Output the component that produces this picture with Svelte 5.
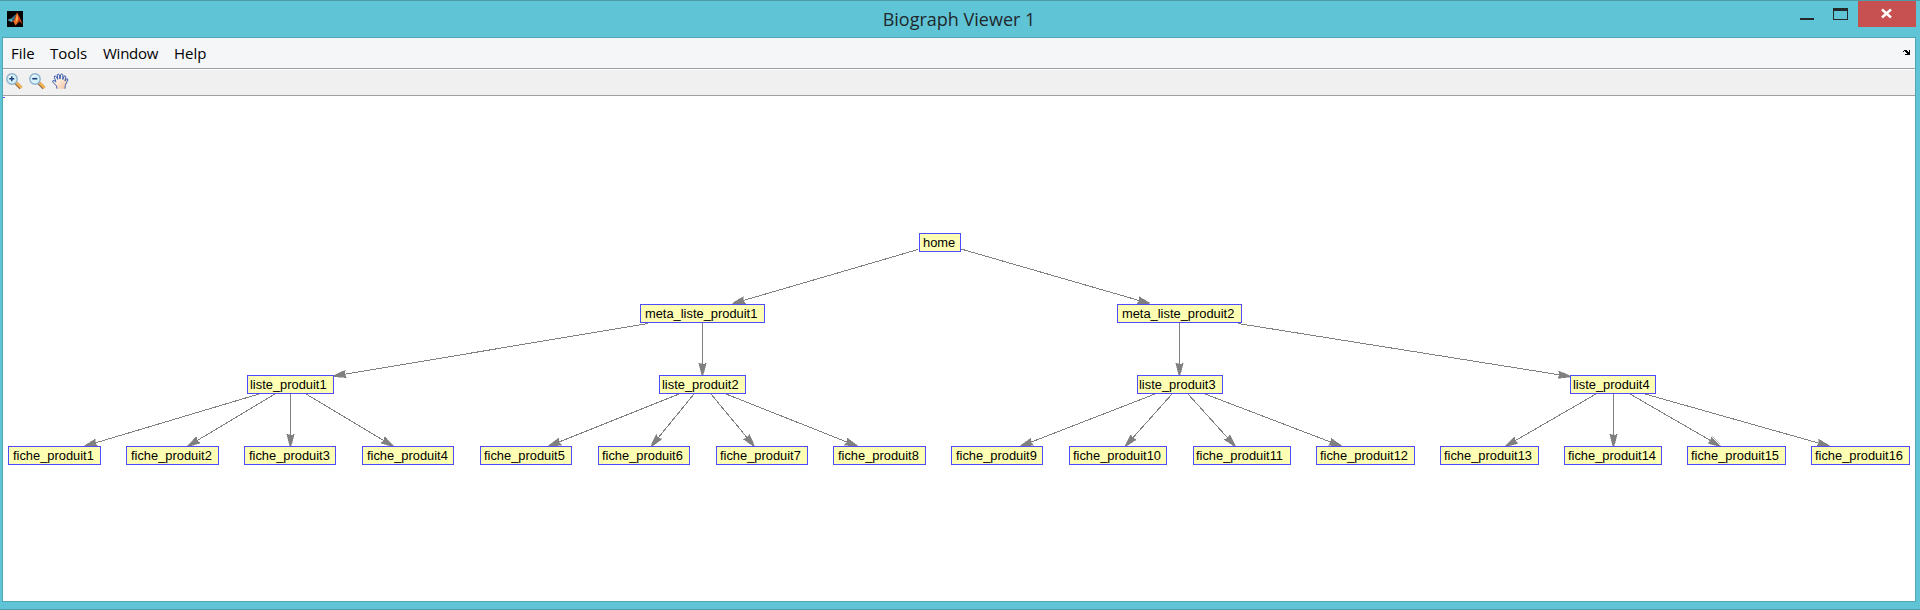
<script>
  // [label, left, top, width, text indent]
  const nodes = [
    ['home', 919, 233, 42, 3],
    ['meta_liste_produit1', 640, 304, 125, 4],
    ['meta_liste_produit2', 1117, 304, 125, 4],
    ['liste_produit1', 247, 375, 87, 2.4],
    ['liste_produit2', 659, 375, 87, 2.4],
    ['liste_produit3', 1137, 375, 86, 1.4],
    ['liste_produit4', 1570, 375, 86, 2.4],
    ['fiche_produit1', 8, 446, 93, 4.4],
    ['fiche_produit2', 126, 446, 93, 4.4],
    ['fiche_produit3', 244, 446, 92, 4.4],
    ['fiche_produit4', 362, 446, 92, 4.4],
    ['fiche_produit5', 480, 446, 92, 3.4],
    ['fiche_produit6', 598, 446, 92, 3.4],
    ['fiche_produit7', 716, 446, 92, 3.4],
    ['fiche_produit8', 833, 446, 93, 4.4],
    ['fiche_produit9', 951, 446, 92, 4.4],
    ['fiche_produit10', 1069, 446, 98, 3],
    ['fiche_produit11', 1193, 446, 98, 2.4],
    ['fiche_produit12', 1316, 446, 99, 3.4],
    ['fiche_produit13', 1440, 446, 99, 3.4],
    ['fiche_produit14', 1564, 446, 98, 3.4],
    ['fiche_produit15', 1687, 446, 99, 3.4],
    ['fiche_produit16', 1811, 446, 99, 3.4]
  ];
  // start point followed by arrow tip
  const edges = [
    [918, 249.5, 733, 303.5], [961, 249, 1149.5, 303.5],
    [648, 323.5, 334, 376], [702.5, 323, 702.5, 375],
    [1179.5, 323, 1179.5, 375], [1238, 323.5, 1570, 376.5],
    [259, 394, 85, 446], [275, 394, 188, 446], [290.5, 394, 290.5, 446], [306, 394, 393, 446],
    [679, 394, 549, 446], [694, 394, 651.5, 446], [711, 394, 754, 446], [726, 394, 857, 446],
    [1155, 394, 1021, 446], [1172, 394, 1125.5, 446], [1188, 394, 1235, 446], [1205, 394, 1341, 446],
    [1596, 394, 1506, 446], [1613.5, 394, 1613.5, 446], [1630, 394, 1720, 446], [1645, 394, 1829, 446]
  ];
  const angle = ([a, b, c, d]) => (Math.atan2(d - b, c - a) * 180) / Math.PI;
</script>

{#snippet lens()}
  <path d="M10 10 L15 15" stroke="#8d6a48" stroke-width="3.8" />
  <path d="M10.6 9.8 L15.6 14.8" stroke="#f8b450" stroke-width="2.4" />
  <circle cx="6" cy="6" r="5.2" fill="#d5f2fa" stroke="#8fb0cc" stroke-width="1.4" />
  <path d="M3 4.5 Q4 2.6 6 2.5" fill="none" stroke="#fff" stroke-width="1.2" />
{/snippet}

<div class="window">
  <header class="titlebar">
    <svg class="logo" width="16" height="16" viewBox="0 0 16 16">
      <rect width="16" height="16" fill="#050303" />
      <path d="M0.5 9 L5 7 L7.5 5 L9.5 3 L7 9 L4.5 11.3Z" fill="#55a3b8" />
      <path d="M5 7 L8.5 3.5 L7 9 L5 11Z" fill="#386f88" />
      <path d="M4 11 L6.5 10 Q8.5 6 10 1.5 Q12 4 15.7 13.2 L12.5 10.5 L8.5 14.5 L6.5 11Z" fill="#bd3c12" />
      <path d="M10 1.5 L11.6 8 L9.4 13 L8.5 14 L7 11 Q9 7 10 1.5Z" fill="#f27a22" />
      <path d="M10 3 L10.8 8 L9 11Z" fill="#ffc06a" />
    </svg>
    <h1>Biograph Viewer 1</h1>
    <div class="controls">
      <svg width="116" height="26" viewBox="0 0 116 26" shape-rendering="crispEdges">
        <rect x="0" y="17" width="14" height="2" fill="#26292b" />
        <rect x="33" y="7" width="15" height="12" fill="#26292b" />
        <rect x="34" y="10" width="13" height="8" fill="#60c4d7" />
        <rect x="58" width="58" height="26" fill="#c75050" />
        <path d="M82 8.5 L91 16.5 M91 8.5 L82 16.5" stroke="#fff" stroke-width="2.4" shape-rendering="auto" />
      </svg>
    </div>
  </header>

  <div class="content">
    <nav class="menu">
      <span class="file">File</span>
      <span class="tools">Tools</span>
      <span class="win">Window</span>
      <span class="help">Help</span>
      <svg class="dock" width="7" height="5" viewBox="0 0 7 5" shape-rendering="crispEdges">
        <path d="M1 0H4V1H5V2H6V0H7V5H2V4H4V3H3V2H2V1H1Z M0 1H1V2H0Z" fill="#000" />
      </svg>
    </nav>
    <div class="toolbar">
      <svg width="17" height="17" viewBox="0 0 17 17">
        {@render lens()}
        <path d="M3.3 5.7H8.3M5.8 3.2V8.2" stroke="#173c78" stroke-width="1.4" />
      </svg>
      <svg width="17" height="17" viewBox="0 0 17 17">
        {@render lens()}
        <path d="M3.3 5.7H8.3" stroke="#173c78" stroke-width="1.6" />
      </svg>
      <svg width="17" height="17" viewBox="0 0 17 17">
        <defs>
          <linearGradient id="skin" x2="1" y2="1">
            <stop offset="0" stop-color="#fff" />
            <stop offset="0.45" stop-color="#fdeadb" />
            <stop offset="1" stop-color="#f3bd92" />
          </linearGradient>
        </defs>
        <path d="M5 15.7 L4.5 13 L0.8 9 Q0.3 7.2 2 7.5 L4 9 L2.3 4.2 Q2.2 2.5 3.7 3 L5.8 6.4 L5.2 1.8 Q5.8 0.2 7.2 1.6 L8 6 L8.7 1.5 Q10 0.1 10.8 1.6 L10.8 6.5 L12 3.2 Q13.4 2.2 13.8 3.8 L13 8 L14.3 6 Q16.2 5.2 15.8 7 L13.3 12.4 L13 15.7Z" fill="url(#skin)" />
        <path d="M5 15.7 L4.5 13 L0.8 9 Q0.3 7.2 2 7.5 L4 9 L2.3 4.2 Q2.2 2.5 3.7 3 L5.8 6.4 L5.2 1.8 Q5.8 0.2 7.2 1.6 L8 6 L8.7 1.5 Q10 0.1 10.8 1.6 L10.8 6.5 L12 3.2 Q13.4 2.2 13.8 3.8 L13 8 L14.3 6 Q16.2 5.2 15.8 7 L13.3 12.4 L13 15.7" fill="none" stroke="#3f62b4" stroke-width="1" />
      </svg>
    </div>
    <main class="canvas">
      <svg class="edges" width="1912" height="505" viewBox="3 96 1912 505" shape-rendering="crispEdges">
        <rect x="3" y="97" width="2" height="1" fill="#5050e8" />
        {#each edges as e}
          <line x1={e[0]} y1={e[1]} x2={e[2]} y2={e[3]} />
          <path d="M0 -0.6 L-12 -3.8 L-11 -1 L-11 1 L-12 3.8 L0 0.6Z" transform={`translate(${e[2]} ${e[3]}) rotate(${angle(e)})`} />
        {/each}
      </svg>
      {#each nodes as [label, x, y, w, indent]}
        <div class="node" style={`left:${x - 3}px;top:${y - 96}px;width:${w}px;padding-left:${indent}px`}>
          <span>{label}</span>
        </div>
      {/each}
    </main>
  </div>
</div>

<style>
  :global(body) { margin: 0; overflow: hidden; }
  .window {
    box-sizing: border-box;
    width: 1920px;
    height: 610px;
    display: flex;
    flex-direction: column;
    background: #60c4d7;
    border-top: 1px solid #4b9ba9;
    border-bottom: 1px solid #4b9ba9;
    padding: 0 4px 7px 2px;
  }
  .titlebar {
    height: 36px;
    flex: none;
    display: grid;
    grid-template-columns: 300px 1fr 300px;
    color: #20282b;
  }
  .logo { margin: 10px 0 0 5px; }
  h1 {
    margin: 0;
    text-align: center;
    font: 400 18px/36px "Open Sans", sans-serif;
  }
  .controls { display: flex; justify-content: flex-end; }
  .content {
    flex: 1;
    display: flex;
    flex-direction: column;
    border: 1px solid #52a6b5;
  }
  .menu {
    box-sizing: border-box;
    height: 32px;
    flex: none;
    display: flex;
    padding-left: 8px;
    background: #f5f6f8;
    border-bottom: 1px solid #fff;
    box-shadow: inset 0 -1px #a0a0a0;
    font: 15px/31px "Open Sans", sans-serif;
    color: #000;
  }
  .file { width: 39px; }
  .tools { width: 53px; }
  .win { width: 71px; letter-spacing: -0.25px; }
  .dock { margin: 12px 5px 0 auto; }
  .toolbar {
    box-sizing: border-box;
    height: 26px;
    flex: none;
    display: flex;
    gap: 6px;
    padding: 3px 0 0 3px;
    background: #f0f0f0;
    border-bottom: 1px solid #a0a0a0;
  }
  .canvas { position: relative; flex: 1; background: #fff; }
  .edges { display: block; }
  .edges line { stroke: #808080; stroke-width: 1; }
  .edges path { fill: #808080; stroke: #808080; stroke-width: 0.5; }
  .node {
    position: absolute;
    box-sizing: border-box;
    height: 19px;
    background: #ffffb3;
    border: 1px solid #4c4cff;
    font: 13.7px/17px "Liberation Sans", Arial, sans-serif;
    color: #000;
    white-space: nowrap;
  }
  .node span {
    display: inline-block;
    transform: scaleX(0.94);
    transform-origin: 0 0;
  }
</style>
